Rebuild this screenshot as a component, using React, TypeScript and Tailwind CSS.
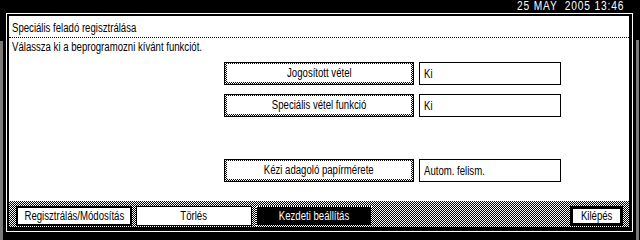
import React from 'react';

const checker =
  'bg-[image:repeating-conic-gradient(#000_0_25%,#fff_0_50%)] bg-[length:2px_2px]';

// the panel font is a narrow bitmap face: Arial metrics squeezed horizontally
const T: React.FC<{ children: React.ReactNode; left?: boolean }> = ({ children, left }) => (
  <span
    className={`inline-block shrink-0 scale-x-[0.8] whitespace-nowrap ${left ? 'origin-left' : 'origin-center'}`}
  >
    {children}
  </span>
);

const SettingRow: React.FC<{ label: string; value: string; className?: string }> = ({
  label,
  value,
  className = '',
}) => (
  <div className={`flex h-[23px] gap-[5px] ${className}`}>
    <div className="w-[190px] border border-black">
      <div className={`h-full px-[2px] pt-[1px] pb-[2px] ${checker}`}>
        <div className="flex h-full items-center justify-center bg-white">
          <T>{label}</T>
        </div>
      </div>
    </div>
    <div className="flex w-[142px] items-center border border-black bg-white pl-[4px]">
      <T left>{value}</T>
    </div>
  </div>
);

export default function App() {
  return (
    <div className="flex h-[240px] w-[640px] flex-col overflow-hidden bg-black font-['Liberation_Sans',Arial,sans-serif] text-[12px] leading-none text-black">
      {/* status bar */}
      <div className="flex h-[14px] items-center justify-end pr-[16px] text-white">
        <span className="inline-block origin-right scale-x-[0.85] whitespace-pre tracking-[1px]">
          25 MAY  2005 13:46
        </span>
      </div>
      <div className="h-px w-[633px] bg-[#808080]" />

      <div className="flex flex-1">
        {/* left edge */}
        <div className="w-[6px]">
          <div className="mt-[29px] h-[200px] w-[3px] bg-[#7a7a7a]" />
        </div>

        {/* frame */}
        <div className="mt-px h-[219px] w-[627px] border border-white">
          <div className="flex h-full flex-col border-t-2 border-r-[3px] border-b-4 border-l-2 border-black bg-white">
            <div className="flex h-[22px] items-center border-b border-dotted border-black pt-[2px] pl-[3px]">
              <T left>Speciális feladó regisztrálása</T>
            </div>
            <div className="flex h-[17px] items-center pl-[3px]">
              <T left>Válassza ki a beprogramozni kívánt funkciót.</T>
            </div>

            <div className="flex flex-1 flex-col pl-[215px]">
              <SettingRow className="mt-[7px]" label="Jogosított vétel" value="Ki" />
              <SettingRow className="mt-[9px]" label="Speciális vétel funkció" value="Ki" />
              <SettingRow className="mt-[42px]" label="Kézi adagoló papírmérete" value="Autom. felism." />
            </div>

            {/* bottom bar */}
            <div className={`flex h-[26px] items-end gap-[4px] pr-[6px] pb-px pl-[7px] ${checker}`}>
              <div className="flex h-[20px] w-[116px] items-center justify-center border-2 border-black bg-white">
                <T>Regisztrálás/Módosítás</T>
              </div>
              <div className="flex h-[20px] w-[116px] items-center justify-center border border-black bg-white">
                <T>Törlés</T>
              </div>
              <div className="flex h-[20px] w-[116px] items-center justify-center border border-dotted border-white bg-black text-white">
                <T>Kezdeti beállítás</T>
              </div>
              <div className="ml-auto flex h-[20px] w-[53px] items-center justify-center border-[3px] border-black bg-white">
                <T>Kilépés</T>
              </div>
            </div>
          </div>
        </div>

        {/* right edge */}
        <div className="w-[7px]">
          <div className="mt-[28px] ml-[3px] h-[200px] w-[3px] bg-[#7a7a7a]" />
        </div>
      </div>
    </div>
  );
}
